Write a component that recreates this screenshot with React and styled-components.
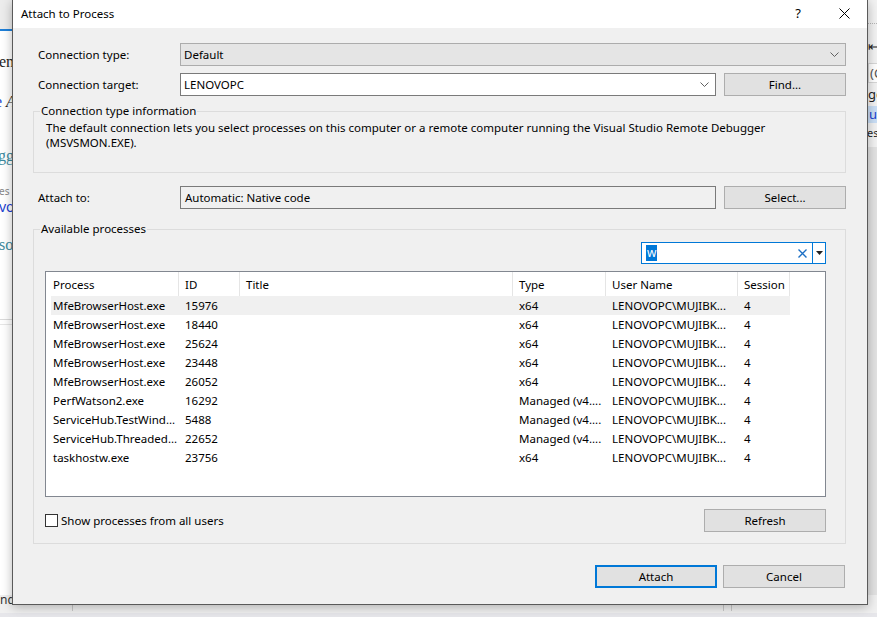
import React from "react";
import styled, { createGlobalStyle } from "styled-components";

const GlobalStyle = createGlobalStyle`
  html, body {
    margin: 0;
    padding: 0;
    width: 877px;
    height: 617px;
    overflow: hidden;
  }
  body {
    font-family: "Noto Sans", "Open Sans", sans-serif;
    font-size: 11.5px;
    color: #000;
  }
  * {
    box-sizing: border-box;
  }
`;

const processes = [
  ["MfeBrowserHost.exe", "15976", "", "x64", "LENOVOPC\\MUJIBK...", "4"],
  ["MfeBrowserHost.exe", "18440", "", "x64", "LENOVOPC\\MUJIBK...", "4"],
  ["MfeBrowserHost.exe", "25624", "", "x64", "LENOVOPC\\MUJIBK...", "4"],
  ["MfeBrowserHost.exe", "23448", "", "x64", "LENOVOPC\\MUJIBK...", "4"],
  ["MfeBrowserHost.exe", "26052", "", "x64", "LENOVOPC\\MUJIBK...", "4"],
  ["PerfWatson2.exe", "16292", "", "Managed (v4....", "LENOVOPC\\MUJIBK...", "4"],
  ["ServiceHub.TestWind...", "5488", "", "Managed (v4....", "LENOVOPC\\MUJIBK...", "4"],
  ["ServiceHub.Threaded...", "22652", "", "Managed (v4....", "LENOVOPC\\MUJIBK...", "4"],
  ["taskhostw.exe", "23756", "", "x64", "LENOVOPC\\MUJIBK...", "4"],
];

const columns = ["Process", "ID", "Title", "Type", "User Name", "Session"];

const Chevron = () => (
  <svg width="9" height="5" viewBox="0 0 9 5">
    <polyline points="0.5,0.5 4.5,4.5 8.5,0.5" fill="none" stroke="#606060" strokeWidth="1" />
  </svg>
);

const App = () => (
  <>
    <GlobalStyle />
    <Desktop>
      <Backdrop>
        <Workspace>
          <SidePane $width={12}>
            <TabStrip />
            <Fragment $mt={23} $serif $shift={-1}>em</Fragment>
            <Fragment $mt={24} $serif $shift={-5}>
              <Blue>e</Blue> <i>A</i>
            </Fragment>
            <Fragment $mt={38} $serif $color="#3c8a9e" $shift={-2}>gg</Fragment>
            <Fragment $mt={19} $size={10} $color="#888" $shift={-1}>es</Fragment>
            <Fragment $mt={0} $color="#1a3fd0" $size={14} $shift={-1}>vo</Fragment>
            <Fragment $mt={22} $serif $color="#3c8a9e" $shift={-1}>so</Fragment>
            <PaneRule $mt={66} />
          </SidePane>
          <SidePane $width={9} $bg="#e2e2e2">
            <RightHead>
              <Dots />
              <Fragment $mt={13} $size={13} $shift={0}>⇤</Fragment>
              <RightField>(C</RightField>
              <Fragment $mt={3} $size={13} $shift={0}>gg</Fragment>
              <Highlight>u</Highlight>
              <Fragment $mt={2} $size={11} $shift={-1}>es</Fragment>
            </RightHead>
          </SidePane>
        </Workspace>
        <StatusBar>
          <StatusLeft>nd</StatusLeft>
          <StatusDivider />
          <StatusIcon>▽ ▾</StatusIcon>
          <StatusCells>
            <span>Ln: 15</span>
            <span>Ch: 1</span>
            <span>SPC</span>
            <span>CRLF</span>
          </StatusCells>
          <StatusDivider />
          <StatusGap />
          <StatusDivider />
        </StatusBar>
      </Backdrop>

      <Dialog>
        <TitleBar>
          <Title>Attach to Process</Title>
          <CaptionButton>?</CaptionButton>
          <CaptionButton>
            <svg width="11" height="11" viewBox="0 0 11 11">
              <path d="M0.5 0.5 L10.5 10.5 M10.5 0.5 L0.5 10.5" stroke="#000" strokeWidth="1" />
            </svg>
          </CaptionButton>
        </TitleBar>

        <Body>
          <FieldRow>
            <Label>Connection type:</Label>
            <Combo $readonly>
              <span>Default</span>
              <Chevron />
            </Combo>
          </FieldRow>

          <FieldRow $mt={7}>
            <Label>Connection target:</Label>
            <Controls>
              <Combo>
                <span>LENOVOPC</span>
                <Chevron />
              </Combo>
              <Button>Find...</Button>
            </Controls>
          </FieldRow>

          <Group $mt={7} $pb={22}>
            <Legend>Connection type information</Legend>
            <InfoText>
              The default connection lets you select processes on this computer or a remote computer running the Visual
              Studio Remote Debugger
              <br />
              (MSVSMON.EXE).
            </InfoText>
          </Group>

          <FieldRow $mt={13}>
            <Label>Attach to:</Label>
            <Controls>
              <ReadOnlyBox>Automatic: Native code</ReadOnlyBox>
              <Button>Select...</Button>
            </Controls>
          </FieldRow>

          <Group $mt={12} $pb={11}>
            <Legend>Available processes</Legend>
            <SearchRow>
              <SearchBox>
                <SearchInput>
                  <Selected>w</Selected>
                  <svg width="9" height="9" viewBox="0 0 9 9">
                    <path d="M0.5 0.5 L8.5 8.5 M8.5 0.5 L0.5 8.5" stroke="#1c6fc4" strokeWidth="1.4" />
                  </svg>
                </SearchInput>
                <SearchDrop>
                  <svg width="7" height="4" viewBox="0 0 7 4">
                    <polygon points="0,0 7,0 3.5,4" fill="#222" />
                  </svg>
                </SearchDrop>
              </SearchBox>
            </SearchRow>

            <ProcessList>
              <HeaderRow>
                {columns.map((c) => (
                  <HeaderCell key={c}>{c}</HeaderCell>
                ))}
              </HeaderRow>
              {processes.map((p, i) => (
                <DataRow key={i} $selected={i === 0}>
                  {p.map((v, j) => (
                    <DataCell key={j}>{v}</DataCell>
                  ))}
                </DataRow>
              ))}
            </ProcessList>

            <OptionsRow>
              <CheckLabel>
                <CheckBox />
                Show processes from all users
              </CheckLabel>
              <Button>Refresh</Button>
            </OptionsRow>
          </Group>

          <Footer>
            <Button $primary>Attach</Button>
            <Button>Cancel</Button>
          </Footer>
        </Body>
      </Dialog>
    </Desktop>
  </>
);

/* ---------- backdrop (Visual Studio behind the dialog) ---------- */

const Desktop = styled.div`
  position: relative;
  width: 877px;
  height: 617px;
  overflow: hidden;
  background: #ffffff;
`;

const Backdrop = styled.div`
  display: flex;
  flex-direction: column;
  height: 100%;
`;

const Workspace = styled.div`
  flex: 1;
  display: flex;
  justify-content: space-between;
`;

const SidePane = styled.div`
  width: ${(p) => p.$width}px;
  display: flex;
  flex-direction: column;
  background: ${(p) => p.$bg || "#ffffff"};
  overflow: hidden;
`;

const TabStrip = styled.div`
  height: 31px;
  flex-shrink: 0;
  background: #ececec;
  border-bottom: 2px solid #1e7fd8;
`;

const Fragment = styled.div`
  margin-top: ${(p) => p.$mt}px;
  margin-left: ${(p) => p.$shift}px;
  font-family: ${(p) => (p.$serif ? '"Liberation Serif", serif' : '"Noto Sans", sans-serif')};
  font-size: ${(p) => p.$size || 16}px;
  line-height: 16px;
  color: ${(p) => p.$color || "#1e1e1e"};
  white-space: nowrap;
`;

const Blue = styled.span`
  color: #1a3fd0;
`;

const PaneRule = styled.div`
  margin-top: ${(p) => p.$mt}px;
  height: 6px;
  border-top: 1px solid #dadada;
  border-bottom: 1px solid #e6e6e6;
`;

const RightHead = styled.div`
  display: flex;
  flex-direction: column;
  background: #f2f2f2;
  padding-bottom: 6px;
`;

const Dots = styled.div`
  margin-top: 23px;
  height: 2px;
  border-top: 1px dotted #b5b5b5;
`;

const RightField = styled.div`
  margin-top: 9px;
  height: 20px;
  line-height: 18px;
  font-size: 13px;
  color: #555;
  background: #fff;
  border: 1px solid #d6d6d6;
  border-right: none;
  padding-left: 1px;
`;

const Highlight = styled.div`
  margin-top: 4px;
  height: 17px;
  line-height: 16px;
  font-size: 13px;
  color: #1a3fd0;
  background: #c9def5;
  padding-left: 1px;
`;

const StatusBar = styled.div`
  height: 22px;
  flex-shrink: 0;
  display: flex;
  align-items: flex-start;
  background: #f0f0f0;
  border-bottom: 4px solid #e6e6ea;
  font-size: 12px;
  color: #333;
`;

const StatusLeft = styled.div`
  width: 72px;
  line-height: 18px;
  margin-top: -4px;
`;

const StatusDivider = styled.div`
  width: 1px;
  height: 16px;
  background: #c8c8c8;
`;

const StatusIcon = styled.div`
  width: 470px;
  padding-left: 16px;
  line-height: 12px;
  margin-top: -2px;
  font-size: 10px;
`;

const StatusCells = styled.div`
  display: flex;
  gap: 22px;
  width: 180px;
  line-height: 14px;
  margin-top: -6px;
`;

const StatusGap = styled.div`
  width: 7px;
`;

/* ---------- dialog ---------- */

const Dialog = styled.div`
  position: absolute;
  left: 12px;
  top: 0;
  width: 856px;
  height: 605px;
  display: flex;
  flex-direction: column;
  background: #f0f0f0;
  border: 1px solid #5a5a5a;
  border-top: none;
  box-shadow: 0 2px 10px rgba(0, 0, 0, 0.28);
`;

const TitleBar = styled.div`
  height: 28px;
  display: flex;
  align-items: center;
  background: #ffffff;
`;

const Title = styled.div`
  flex: 1;
  padding-left: 8px;
  padding-bottom: 2px;
`;

const CaptionButton = styled.div`
  width: 46px;
  height: 28px;
  display: flex;
  align-items: center;
  justify-content: center;
  font-size: 13px;
  padding-bottom: 2px;
`;

const Body = styled.div`
  display: flex;
  flex-direction: column;
  padding: 15px 21px 0 20px;
`;

const FieldRow = styled.div`
  display: grid;
  grid-template-columns: 147px 1fr;
  align-items: center;
  margin-top: ${(p) => p.$mt || 0}px;
`;

const Label = styled.div`
  padding-left: 5px;
`;

const Controls = styled.div`
  display: flex;
  gap: 8px;
`;

const Combo = styled.div`
  flex: 1;
  height: 23px;
  display: flex;
  align-items: center;
  justify-content: space-between;
  padding: 0 6px 0 3px;
  background: ${(p) => (p.$readonly ? "#e5e5e5" : "#ffffff")};
  border: 1px solid ${(p) => (p.$readonly ? "#acacac" : "#7a7a7a")};
`;

const ReadOnlyBox = styled.div`
  flex: 1;
  height: 23px;
  display: flex;
  align-items: center;
  padding-left: 4px;
  background: #f0f0f0;
  border: 1px solid #7a7a7a;
`;

const Button = styled.div`
  width: 122px;
  height: 23px;
  display: flex;
  align-items: center;
  justify-content: center;
  background: #e1e1e1;
  border: ${(p) => (p.$primary ? "2px solid #0078d7" : "1px solid #adadad")};
`;

const Group = styled.fieldset`
  margin: ${(p) => p.$mt}px 0 0 0;
  padding: 0 19px ${(p) => p.$pb}px 11px;
  border: 1px solid #dcdcdc;
  min-width: 0;
`;

const Legend = styled.legend`
  margin-left: -5px;
  padding: 0 1px;
  line-height: 16px;
`;

const InfoText = styled.div`
  margin-top: 1px;
  padding-left: 1px;
  line-height: 15px;
`;

const SearchRow = styled.div`
  display: flex;
  justify-content: flex-end;
  margin-top: 5px;
`;

const SearchBox = styled.div`
  display: flex;
  height: 22px;
`;

const SearchInput = styled.div`
  width: 172px;
  display: flex;
  align-items: center;
  justify-content: space-between;
  padding: 0 5px 0 4px;
  background: #ffffff;
  border: 1px solid #0078d7;
`;

const Selected = styled.span`
  background: #0078d7;
  color: #ffffff;
  line-height: 16px;
  padding: 0 1px;
  font-size: 12px;
`;

const SearchDrop = styled.div`
  width: 13px;
  display: flex;
  align-items: center;
  justify-content: center;
  background: #ffffff;
  border: 1px solid #0078d7;
  border-left: none;
`;

const ProcessList = styled.div`
  margin-top: 7px;
  height: 226px;
  background: #ffffff;
  border: 1px solid #828790;
`;

const HeaderRow = styled.div`
  display: grid;
  grid-template-columns: 133px 61px 273px 93px 132px 52px;
  height: 24px;
`;

const HeaderCell = styled.div`
  display: flex;
  align-items: center;
  padding-left: 6px;
  border-right: 1px solid #e5e5e5;
  &:first-child {
    padding-left: 7px;
  }
`;

const DataRow = styled.div`
  display: grid;
  grid-template-columns: 128px 61px 273px 93px 132px 52px;
  height: 19px;
  margin-left: 5px;
  width: max-content;
  background: ${(p) => (p.$selected ? "#f0f0f0" : "transparent")};
`;

const DataCell = styled.div`
  display: flex;
  align-items: center;
  padding-left: 6px;
  white-space: nowrap;
  overflow: hidden;
  &:first-child {
    padding-left: 2px;
  }
`;

const OptionsRow = styled.div`
  display: flex;
  align-items: center;
  justify-content: space-between;
  margin-top: 12px;
`;

const CheckLabel = styled.div`
  display: flex;
  align-items: center;
  gap: 3px;
`;

const CheckBox = styled.span`
  width: 13px;
  height: 13px;
  background: #ffffff;
  border: 1px solid #333333;
`;

const Footer = styled.div`
  display: flex;
  justify-content: flex-end;
  gap: 6px;
  margin-top: 21px;
  padding-right: 1px;
`;

export default App;
